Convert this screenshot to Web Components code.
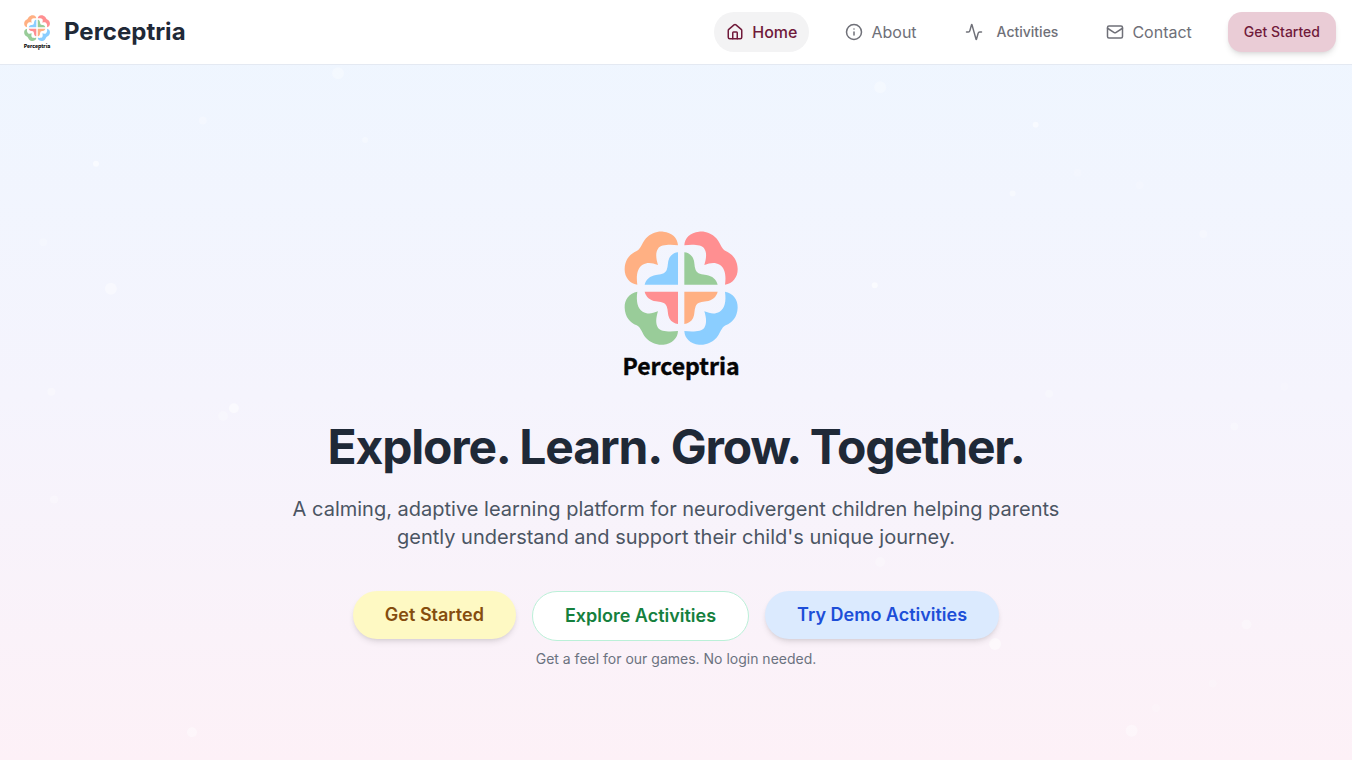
<!DOCTYPE html>
<html lang="en">
<head>
<meta charset="utf-8">
<meta name="viewport" content="width=device-width, initial-scale=1">
<title>Perceptria</title>
<style>
  body { margin: 0; font-family: Inter, "Liberation Sans", sans-serif; font-size: 16px; line-height: 24px; color: #1f2937; }
</style>
</head>
<body>
<perceptria-page></perceptria-page>

<script>
const define = (name, html, setup) => {
  const template = document.createElement('template');
  template.innerHTML = html;
  customElements.define(name, class extends HTMLElement {
    constructor() {
      super();
      this.attachShadow({ mode: 'open' }).append(template.content.cloneNode(true));
    }
    connectedCallback() { if (setup) setup(this, this.shadowRoot); }
  });
};

// Four-petal brain mark: one quadrant of two shapes, mirrored on both axes.
const outer = 'M82 194C58 190 43 170 44 146C45 118 60 102 80 93C94 86 96 68 108 55C122 40 142 33 160 35C186 37 203 54 204 76C178 73 152 74 144 86C136 98 138 116 144 135C126 128 112 126 98 134C82 144 78 166 82 194Z';
const inner = 'M204 97V194H104C108 178 120 168 138 165C150 163 166 162 170 150C175 138 172 126 178 114C184 103 194 98 204 97Z';
const quad = (flip, a, b) => `<g transform="${flip}"><path fill="${a}" d="${outer}"/><path fill="${b}" d="${inner}"/></g>`;
define('brand-logo', `
  <style>
    :host { display: block; width: 114px; }
    svg { display: block; width: 100%; height: auto; overflow: visible; }
    text { font: 700 23px "Noto Sans CJK SC", "Noto Sans", sans-serif; fill: #050505; stroke: #050505; stroke-width: .4; }
  </style>
  <svg viewBox="0 0 114 150" role="img" aria-label="Perceptria logo">
    <g transform="translate(-14 -11) scale(.3333)">
      ${quad('', '#ffb083', '#8bceff')}
      ${quad('translate(427 0) scale(-1 1)', '#ff8f91', '#99cc99')}
      ${quad('translate(0 409) scale(1 -1)', '#99cc99', '#ff8f91')}
      ${quad('translate(427 409) scale(-1 -1)', '#8bceff', '#ffb083')}
    </g>
    <text x="57" y="144" text-anchor="middle">Perceptria</text>
  </svg>`);

const icons = {
  home: '<path d="M15 21v-8a1 1 0 0 0-1-1h-4a1 1 0 0 0-1 1v8"/><path d="M3 10a2 2 0 0 1 .709-1.528l7-5.999a2 2 0 0 1 2.582 0l7 5.999A2 2 0 0 1 21 10v9a2 2 0 0 1-2 2H5a2 2 0 0 1-2-2z"/>',
  info: '<circle cx="12" cy="12" r="10"/><path d="M12 16v-4"/><path d="M12 8h.01"/>',
  activity: '<path d="M22 12h-2.480a2 2 0 0 0-1.930 1.460l-2.350 8.360a.25.25 0 0 1-.48 0L9.240 2.180a.25.25 0 0 0-.48 0l-2.350 8.360A2 2 0 0 1 4.490 12H2"/>',
  mail: '<rect width="20" height="16" x="2" y="4" rx="2"/><path d="m22 7-8.970 5.700a1.940 1.940 0 0 1-2.060 0L2 7"/>'
};
define('nav-item', `
  <style>
    :host { display: block; color: #6f7078; }
    :host([active]) { color: #701a3a; font-weight: 500; }
    a { display: flex; align-items: center; gap: 8px; height: 40px; padding: 0 12px; border-radius: 20px; color: inherit; text-decoration: none; }
    :host([active]) a { background: #f3f3f4; }
    :host([compact]) a { gap: 14px; font-size: 14px; font-weight: 500; }
    svg { width: 18px; height: 18px; fill: none; stroke: currentColor; stroke-width: 2; stroke-linecap: round; stroke-linejoin: round; }
  </style>
  <a><svg viewBox="0 0 24 24" aria-hidden="true"></svg><slot></slot></a>`,
  (host, root) => {
    root.querySelector('a').href = host.getAttribute('href');
    root.querySelector('svg').innerHTML = icons[host.getAttribute('icon')];
  });

define('pill-button', `
  <style>
    :host { display: block; }
    button { display: block; box-sizing: border-box; height: 48px; margin: 0; padding: 0 32px; border: 0; border-radius: 25px; font: inherit; font-size: 18px; line-height: 28px; font-weight: 600; cursor: pointer; white-space: nowrap; color: #854d0e; background: #fef9c3; box-shadow: 0 4px 6px -1px #0000001a, 0 2px 4px -2px #0000001a; }
    :host([tone="green"]) button { height: 50px; border: 1px solid #bbf0d8; color: #15803d; background: #fff; box-shadow: none; }
    :host([tone="blue"]) button { color: #1d4ed8; background: #dbeafe; }
    :host([tone="rose"]) button { height: 40px; padding: 0 16px; border-radius: 14px; font-size: 14px; line-height: 20px; font-weight: 500; color: #701a3a; background: #eaccd6; }
  </style>
  <button type="button"><slot></slot></button>`);

define('site-header', `
  <style>
    :host { display: block; background: #fff; border-bottom: 1px solid #e4e9f2; }
    header { display: flex; align-items: center; justify-content: space-between; height: 64px; padding: 0 16px 0 24px; }
    .brand { display: flex; align-items: center; gap: 14px; color: #1f2937; text-decoration: none; font-size: 24px; line-height: 32px; font-weight: 700; }
    brand-logo { width: 26px; }
    nav { display: flex; align-items: center; gap: 24px; }
  </style>
  <header>
    <a class="brand" href="#home"><brand-logo></brand-logo><span>Perceptria</span></a>
    <nav aria-label="Main">
      <nav-item href="#home" icon="home" active>Home</nav-item>
      <nav-item href="#about" icon="info">About</nav-item>
      <nav-item href="#activities" icon="activity" compact>Activities</nav-item>
      <nav-item href="#contact" icon="mail">Contact</nav-item>
      <pill-button tone="rose">Get Started</pill-button>
    </nav>
  </header>`);

// Faint drifting specks: x %, y %, radius, opacity.
const specks = [[25,1.200,6,.3],[15,8,4,.25],[27,10.800,3,.3],[7.100,14.200,3,.6],[3.200,25.500,4,.2],[8.200,32.200,6,.4],[3.800,47,4,.3],[17.300,49.400,5,.5],[16.500,50.500,5,.25],[65.100,3.200,6,.3],[76.600,8.600,3,.5],[74.900,18.500,3,.4],[79.700,15.500,4,.15],[84.300,17.300,4,.15],[89,24.300,4,.25],[64.700,31.700,3,.6],[95,46.300,4,.15],[77.600,47.300,4,.25],[91.300,52,4,.25],[4,62.500,4,.3],[65.100,71.500,5,.25],[73.600,83.300,6,.5],[92.200,80.500,5,.3],[89.700,89,4,.2],[85.500,92.500,4,.2],[83.700,95.800,6,.4],[14.200,96,5,.4]];
define('hero-section', `
  <style>
    :host { display: flex; flex-direction: column; align-items: center; justify-content: center; position: relative; flex: 1; padding: 64px 16px; text-align: center; }
    .specks { position: absolute; inset: 0; width: 100%; height: 100%; fill: #fff; pointer-events: none; }
    .content { position: relative; display: flex; flex-direction: column; align-items: center; margin-top: 74px; }
    brand-logo { margin: 0 -10px 0 0; }
    h1 { margin: 36px 0 0; font-size: 48px; line-height: 60px; font-weight: 700; letter-spacing: -0.025em; }
    p { margin: 18px 0 0; max-width: 768px; font-size: 20px; line-height: 28px; color: #4b5563; }
    .actions { display: flex; flex-wrap: wrap; justify-content: center; align-items: flex-start; gap: 16px; margin-top: 40px; }
    small { margin-top: 8px; font-size: 14px; line-height: 20px; color: #6b7280; }
  </style>
  <svg class="specks" aria-hidden="true">${specks.map(([x, y, r, o]) => `<circle cx="${x}%" cy="${y}%" r="${r}" opacity="${o}"/>`).join('')}</svg>
  <div class="content">
    <brand-logo></brand-logo>
    <h1>Explore. Learn. Grow. Together.</h1>
    <p>A calming, adaptive learning platform for neurodivergent children helping parents gently understand and support their child's unique journey.</p>
    <div class="actions">
      <pill-button>Get Started</pill-button>
      <pill-button tone="green">Explore Activities</pill-button>
      <pill-button tone="blue">Try Demo Activities</pill-button>
    </div>
    <small>Get a feel for our games. No login needed.</small>
  </div>`);

define('perceptria-page', `
  <style>
    :host { display: flex; flex-direction: column; min-height: 100vh; background: linear-gradient(#eef6ff, #f5f4fd 52%, #fdf1f7); }
    main { display: flex; flex: 1; }
  </style>
  <site-header></site-header>
  <main><hero-section></hero-section></main>`);
</script>
</body>
</html>
